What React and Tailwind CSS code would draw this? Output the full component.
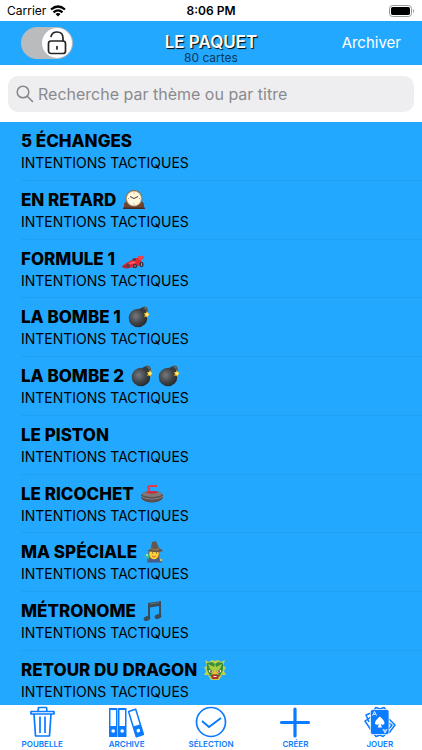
import { useState } from "react";

const ClockIcon = () => (
  <svg viewBox="0 0 22 22" className="w-[22px] h-[22px]" role="img" aria-label="Horloge">
    <path d="M1 20V16Q1 13 4 12L5 8Q6 2 11 1.500Q16 2 17 8L18 12Q21 13 21 16V20Z" fill="#70432f" />
    <path d="M0 18.500H22V20H0Z" fill="#4b2b20" />
    <circle cx="11" cy="9.500" r="8.500" fill="#83634a" />
    <circle cx="11" cy="9.500" r="7.300" fill="#fff8df" stroke="#d5c59c" strokeWidth=".7" />
    <path d="M7 7.500L11 9.500L15 7.500" fill="none" stroke="#443b31" strokeWidth="1" />
    <path d="M11 3.500V4.500M11 14.500V15.500M5 9.500H6M16 9.500H17" stroke="#8c806c" strokeWidth=".8" />
  </svg>
);

const CarIcon = () => (
  <svg viewBox="0 0 22 22" className="w-[22px] h-[22px]" role="img" aria-label="Voiture de course">
    <path d="M1 17L7 13.500L10 12L12 10L16 10V8.500L20 8L21 10L19 12V17L12 19.500H2Z" fill="#db2937" />
    <path d="M16 8.500L22 7.500V11L17 12Z" fill="#f04350" />
    <path d="M7 15L12 13L14 15L5 17Z" fill="#ff5962" />
    <path d="M10 12Q12 9 14 11L13 13Z" fill="#46354b" />
    <path d="M0 18L6 17L9 19L6 20.500L1 20Z" fill="#b62535" />
    <ellipse cx="6" cy="17.500" rx="1.700" ry="2" fill="#5b3a4a" />
    <ellipse cx="13" cy="18" rx="2.200" ry="2.300" fill="#3a3446" />
    <ellipse cx="19.500" cy="16.500" rx="2" ry="2.800" fill="#3a3446" />
    <path d="M13 17V19M19.500 15V18" stroke="#a1a8b0" strokeWidth=".9" />
  </svg>
);

const BombIcon = () => (
  <svg viewBox="0 0 22 22" className="w-[22px] h-[22px]" role="img" aria-label="Bombe">
    <defs>
      <radialGradient id="bomb" cx=".38" cy=".4" r=".65">
        <stop stopColor="#777a7d" />
        <stop offset=".55" stopColor="#43474b" />
        <stop offset="1" stopColor="#25282b" />
      </radialGradient>
    </defs>
    <circle cx="10" cy="12" r="9.300" fill="url(#bomb)" />
    <path d="M11 3L15 1L19 5L17 9Z" fill="#383b3e" />
    <path d="M15 1.500Q19 0 19.500 6" fill="none" stroke="#68543a" strokeWidth="1.500" />
    <path d="M19 5L20 7L21.500 8L20 10L19.500 12L18 10.500L16 11L17 9L16 7L18 7Z" fill="#f6b522" />
    <circle cx="19" cy="8.500" r="1.600" fill="#fff36b" />
  </svg>
);

const StoneIcon = () => (
  <svg viewBox="0 0 22 22" className="w-[22px] h-[22px]" role="img" aria-label="Pierre de curling">
    <path d="M0 12Q2 8 11 8Q20 8 22 12V15Q19 19.500 11 19.500Q3 19.500 0 15Z" fill="#5b4f50" />
    <ellipse cx="11" cy="11" rx="10" ry="3" fill="#82787a" />
    <path d="M0 13.500Q4 16 11 16Q18 16 22 13.500" fill="none" stroke="#8f8584" strokeWidth=".9" />
    <path d="M5 9.500Q11 12 17 9.500L15 8H7Z" fill="#c92f3b" />
    <path d="M8 9V6L7 4L9 3H16" fill="none" stroke="#e63946" strokeWidth="2.200" strokeLinejoin="round" />
  </svg>
);

const MageIcon = () => (
  <svg viewBox="0 0 22 22" className="w-[22px] h-[22px]" role="img" aria-label="Mage">
    <path d="M3 21.500Q4 16 11 16Q17 16 18 21.500Z" fill="#435b8d" />
    <path d="M5 10Q2 18 7 18H14Q17 15 14 9Z" fill="#795038" />
    <ellipse cx="10" cy="13" rx="4.800" ry="5.200" fill="#ffcf35" />
    <path d="M2 9Q5 10 7 7L8 1L12 0L15 7Q18 8 19 10Q11 13 2 9Z" fill="#65574b" />
    <path d="M7 7Q11 9 15 7V9Q11 11 6 8Z" fill="#8b704f" />
    <path d="M8 12H9M12 12H13" stroke="#61462f" strokeWidth="1.100" />
    <path d="M8 15Q10 17 12 15" fill="none" stroke="#c96a40" />
    <path d="M3 14L4 21" stroke="#896047" strokeWidth="1.400" />
    <circle cx="3" cy="15" r="2.500" fill="#39bba0" />
    <circle cx="3" cy="14" r="1" fill="#a6efce" />
    <circle cx="17" cy="19" r="1.300" fill="#f0bd35" />
  </svg>
);

const NoteIcon = () => (
  <svg viewBox="0 0 22 22" className="w-[22px] h-[22px]" role="img" aria-label="Notes de musique">
    <path d="M5 3L18 1V16H16V6L7 7.500V18H5Z" fill="#3c4c57" />
    <path d="M7 4L16 2.500" stroke="#657b89" strokeWidth=".8" />
    <ellipse cx="4" cy="18.500" rx="3.500" ry="2.300" transform="rotate(-20 4 18.500)" fill="#3c4c57" />
    <ellipse cx="15" cy="16.500" rx="3.500" ry="2.300" transform="rotate(-20 15 16.500)" fill="#3c4c57" />
  </svg>
);

const DragonIcon = () => (
  <svg viewBox="0 0 22 22" className="w-[22px] h-[22px]" role="img" aria-label="Dragon">
    <path d="M1 1L5 3L8 1L11 2L14 1L17 3L21 1L19 7L22 8L20 12L22 16L18 16L15 21H7L4 16L0 16L2 12L0 8L3 7Z" fill="#bfd251" />
    <path d="M3 4L8 3L11 5L14 3L19 4V11L16 17L13 19H9L6 17L3 11Z" fill="#398e3d" />
    <path d="M4 5L10 8L11 4L12 8L18 5L16 10L13 12H9L6 10Z" fill="#a8cf3c" />
    <path d="M5 11L9 12L8 14L5 13ZM17 11L13 12L14 14L17 13Z" fill="#fff9ce" />
    <path d="M7 11.500V13.500M15 11.500V13.500" stroke="#7a3028" strokeWidth="1.500" />
    <path d="M9 13L11 11L13 13L15 16L12 15L11 16L10 15L7 16Z" fill="#eabe36" />
    <path d="M7 16Q11 15 15 16L14 20H8Z" fill="#b53030" />
    <path d="M9 17H13L12 18H10Z" fill="#fff8d8" />
  </svg>
);

const TrashIcon = () => (
  <svg viewBox="0 0 32 32" className="w-8 h-8" fill="none" stroke="currentColor" strokeWidth="1.700" strokeLinejoin="round" aria-hidden="true">
    <path d="M5 5.500H28V8H5ZM12 5.500L12.500 1.500H20.500L21 5.500M8 8L9.500 30H23.500L25 8M14 10.500V27M19 10.500V27" />
  </svg>
);

const BindersIcon = () => (
  <svg viewBox="0 0 38 32" className="w-[38px] h-8" aria-hidden="true">
    <g fill="currentColor">
      <rect x="1" y="2" width="8.500" height="29" rx=".5" />
      <rect x="10" y="2" width="8.500" height="29" rx=".5" />
      <g transform="rotate(-17 28 17)">
        <rect x="23.500" y="3" width="9" height="28" rx="1" />
        <rect x="25" y="4.500" width="6" height="15" fill="white" />
        <circle cx="28" cy="25" r="1.800" fill="white" />
      </g>
    </g>
    <g fill="white">
      <path d="M2.500 4H8V20H2.500ZM11.500 4H17V20H11.500Z" />
      <circle cx="5.200" cy="25" r="1.800" />
      <circle cx="14.200" cy="25" r="1.800" />
    </g>
  </svg>
);

const CheckIcon = () => (
  <svg viewBox="0 0 32 32" className="w-8 h-8" fill="none" stroke="currentColor" strokeWidth="1.700" aria-hidden="true">
    <circle cx="16" cy="16" r="14.500" />
    <path d="M7 15L14 21L26 12" strokeWidth="2" />
  </svg>
);

const PlusIcon = () => (
  <svg viewBox="0 0 32 32" className="w-8 h-8" stroke="currentColor" strokeWidth="3.200" strokeLinecap="round" aria-hidden="true">
    <path d="M16 3V30M2.500 16.500H29.500" />
  </svg>
);

const CardsIcon = () => (
  <svg viewBox="0 0 32 32" className="w-8 h-8" fill="none" stroke="currentColor" strokeWidth="1.500" strokeLinejoin="round" aria-hidden="true">
    <path d="M7 7L2 9L5 16M7 11L1 15L7 24M25 13L31 19L25 27M25 17L28 19L24 24" />
    <path d="M10 4L12 1.500L16 3L20 1.500L22 4M10 28L12 30.500L16 29L19 30.500L22 28" />
    <rect x="6.500" y="3.500" width="18.500" height="25" rx="2" fill="currentColor" stroke="white" strokeWidth=".7" />
    <path d="M15.800 10.500Q21 15 20.500 17.500Q19.500 19.500 16.700 18.300L18 21.500H13.600L15 18.300Q12 19.500 11 17.500Q10.500 15 15.800 10.500Z" fill="white" stroke="none" />
    <path d="M8.500 9.500L10.500 5.500L12.500 9.500M9.500 8.300H11.500M19 23L21 27L23 23M20 24.200H22" stroke="white" strokeWidth=".9" />
  </svg>
);

const cards = [
  { title: "5 ÉCHANGES", icons: [] },
  { title: "EN RETARD", icons: [ClockIcon] },
  { title: "FORMULE 1", icons: [CarIcon] },
  { title: "LA BOMBE 1", icons: [BombIcon] },
  { title: "LA BOMBE 2", icons: [BombIcon, BombIcon] },
  { title: "LE PISTON", icons: [] },
  { title: "LE RICOCHET", icons: [StoneIcon] },
  { title: "MA SPÉCIALE", icons: [MageIcon] },
  { title: "MÉTRONOME", icons: [NoteIcon] },
  { title: "RETOUR DU DRAGON", icons: [DragonIcon] },
];

const tabs = [
  { label: "POUBELLE", Icon: TrashIcon },
  { label: "ARCHIVE", Icon: BindersIcon },
  { label: "SÉLECTION", Icon: CheckIcon },
  { label: "CRÉER", Icon: PlusIcon },
  { label: "JOUER", Icon: CardsIcon },
];

const StatusBar = () => (
  <div className="grid h-[21px] grid-cols-3 items-center px-[7px] text-xs">
    <div className="flex items-center gap-1">
      <span>Carrier</span>
      <svg viewBox="0 0 16 12" className="w-4 h-3" fill="none" stroke="black" strokeWidth="2.300" aria-hidden="true">
        <path d="M1 4.500Q8 -1.500 15 4.500M3.500 7.300Q8 3.500 12.500 7.300" />
        <path d="M8 11.500L5.500 9Q8 7 10.500 9Z" fill="black" stroke="none" />
      </svg>
    </div>
    <span className="text-center font-semibold">8:06 PM</span>
    <svg viewBox="0 0 26 12" className="h-3 w-[26px] justify-self-end" aria-hidden="true">
      <rect x=".5" y=".5" width="22" height="11" rx="3" fill="white" stroke="#999" />
      <rect x="2" y="2" width="19" height="8" rx="1.700" fill="black" />
      <path d="M24 4Q26 6 24 8Z" fill="#999" />
    </svg>
  </div>
);

export default function App() {
  const [unlocked, setUnlocked] = useState(true);
  const [query, setQuery] = useState("");

  const visible = cards.filter((card) => card.title.toLowerCase().includes(query.toLowerCase()));

  return (
    <div className="flex min-h-screen flex-col bg-white font-['Inter',sans-serif] text-black">
      <StatusBar />

      <header className="grid h-11 grid-cols-3 items-center bg-[#22a9ff] px-[21px]">
        <label className="flex h-8 w-[52px] items-center rounded-full bg-[#b9bbbd] p-px">
          <input
            type="checkbox"
            className="peer sr-only"
            checked={unlocked}
            onChange={(e) => setUnlocked(e.target.checked)}
            aria-label="Déverrouiller le paquet"
          />
          <span className="grid size-[30px] place-items-center rounded-full bg-white peer-checked:ml-auto">
            <svg viewBox="0 0 24 26" className="h-[26px] w-6" fill="none" stroke="#252525" strokeWidth="1.700" strokeLinecap="round" aria-hidden="true">
              <rect x="3.500" y="11" width="17" height="12.500" rx="2.500" />
              <path d="M6 6.500Q7 2 12 2Q18 2 18 8V11M12 16.500V19" />
            </svg>
          </span>
        </label>
        <div className="pt-3 text-center">
          <h1 className="text-[17px] leading-[18px] font-semibold whitespace-nowrap text-white [text-shadow:1px_1px_1px_black]">LE PAQUET</h1>
          <p className="text-xs leading-[14px] text-[#07395c]">80 cartes</p>
        </div>
        <button className="justify-self-end text-[15px] text-white">Archiver</button>
      </header>

      <div className="px-2 pt-[11px] pb-[10px]">
        <label className="flex h-9 items-center gap-1 rounded-[10px] bg-[#eeeef0] px-2">
          <svg viewBox="0 0 18 18" className="size-[18px] shrink-0" fill="none" stroke="#85858a" strokeWidth="1.500" strokeLinecap="round" aria-hidden="true">
            <circle cx="7" cy="7" r="5.800" />
            <path d="M11.500 11.500L16.500 16.500" />
          </svg>
          <input
            className="min-w-0 flex-1 bg-transparent text-base outline-none placeholder:text-[#8a8a8f]"
            placeholder="Recherche par thème ou par titre"
            aria-label="Recherche par thème ou par titre"
            value={query}
            onChange={(e) => setQuery(e.target.value)}
          />
        </label>
      </div>

      <ul className="flex flex-1 flex-col bg-[#22a9ff]">
        {visible.map((card) => (
          <li key={card.title} className="group flex flex-col pt-2 pl-[21px] not-last:flex-1 last:pb-[3px]">
            <div className="flex h-[22px] items-center gap-[5px]">
              <h2 className="pr-[2px] text-[17px] leading-[22px] font-extrabold">{card.title}</h2>
              {card.icons.map((Icon, i) => (
                <Icon key={i} />
              ))}
            </div>
            <p className="flex-1 border-[#20a0f3] text-sm leading-[21px] group-not-last:border-b">INTENTIONS TACTIQUES</p>
          </li>
        ))}
      </ul>

      <nav className="grid h-[45px] grid-cols-5 text-[#0b7bff]">
        {tabs.map(({ label, Icon }) => (
          <button key={label} className="flex flex-col items-center gap-px pt-px text-[8px] leading-[10px] font-semibold">
            <Icon />
            {label}
          </button>
        ))}
      </nav>
    </div>
  );
}
